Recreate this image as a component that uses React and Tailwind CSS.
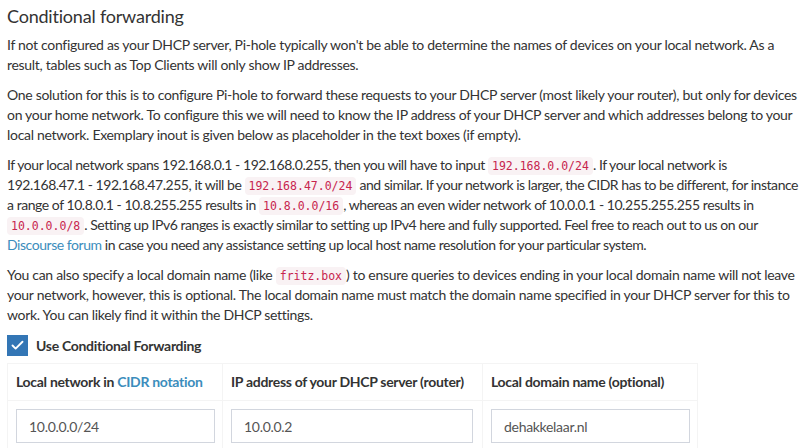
import { Check } from 'lucide-react'

function Code({ children }) {
  return (
    <code className="rounded-[4px] bg-[#f9f2f4] px-[4px] py-[2px] font-['DejaVu_Sans_Mono',monospace] text-[11.5px] leading-[12px] tracking-normal text-[#c7254e]">
      {children}
    </code>
  )
}

function Field({ value, width }) {
  return (
    <input
      type="text"
      defaultValue={value}
      className={`block h-[34px] border border-[#d2d6de] bg-white px-[12px] text-[14px] text-[#555] outline-none ${width}`}
    />
  )
}

export default function App() {
  return (
    <div className="h-[448px] w-[808px] overflow-hidden bg-white pl-[7px] pr-[3px] font-['Lato',sans-serif] text-[14px] leading-[20px] tracking-[-0.3px] text-[#333]">
      <h3 className="pt-[4px] pb-[7px] text-[18px] leading-[24px] font-normal tracking-[-0.2px] text-[#333]">
        Conditional forwarding
      </h3>

      <p className="mb-[10px]">
        If not configured as your DHCP server, Pi-hole typically won't be able to determine the names of devices on
        your local network. As a result, tables such as Top Clients will only show IP addresses.
      </p>

      <p className="mb-[10px]">
        One solution for this is to configure Pi-hole to forward these requests to your DHCP server (most likely your
        router), but only for devices on your home network. To configure this we will need to know the IP address of
        your DHCP server and which addresses belong to your local network. Exemplary inout is given below as
        placeholder in the text boxes (if empty).
      </p>

      {/* line breaks pinned to match the original wrapping */}
      <p className="mb-[10px] tracking-[-0.45px]">
        If your local network spans 192.168.0.1 - 192.168.0.255, then you will have to input{' '}
        <Code>192.168.0.0/24</Code>. If your local network is
        <br />
        192.168.47.1 - 192.168.47.255, it will be <Code>192.168.47.0/24</Code> and similar. If your network is
        larger, the CIDR has to be different, for instance
        <br />
        a range of 10.8.0.1 - 10.8.255.255 results in <Code>10.8.0.0/16</Code>, whereas an even wider network of
        10.0.0.1 - 10.255.255.255 results in
        <br />
        <Code>10.0.0.0/8</Code>. Setting up IPv6 ranges is exactly similar to setting up IPv4 here and fully
        supported. Feel free to reach out to us on our
        <br />
        <a href="#" className="text-[#3c8dbc]">
          Discourse forum
        </a>{' '}
        in case you need any assistance setting up local host name resolution for your particular system.
      </p>

      <p className="mb-[10px]">
        You can also specify a local domain name (like <Code>fritz.box</Code>) to ensure queries to devices ending in
        your local domain name will not leave your network, however, this is optional. The local domain name must
        match the domain name specified in your DHCP server for this to work. You can likely find it within the DHCP
        settings.
      </p>

      <label className="flex items-center gap-[8px] font-bold">
        <span className="flex h-[21px] w-[21px] items-center justify-center bg-[#3376b5]">
          <Check className="h-[15px] w-[15px] text-white" strokeWidth={3} />
        </span>
        Use Conditional Forwarding
      </label>

      <table className="mt-[7px] w-[690px] table-fixed border-collapse border border-[#f4f4f4]">
        <thead>
          <tr>
            <th className="h-[37px] w-[215px] whitespace-nowrap border border-[#f4f4f4] px-[8px] text-left font-bold">
              Local network in{' '}
              <a href="#" className="text-[#3c8dbc]">
                CIDR notation
              </a>
            </th>
            <th className="h-[37px] w-[260px] whitespace-nowrap border border-[#f4f4f4] px-[8px] text-left font-bold">
              IP address of your DHCP server (router)
            </th>
            <th className="h-[37px] w-[215px] whitespace-nowrap border border-[#f4f4f4] px-[8px] text-left font-bold">
              Local domain name (optional)
            </th>
          </tr>
        </thead>
        <tbody>
          <tr>
            <td className="border border-[#f4f4f4] px-[8px] py-[8px]">
              <Field value="10.0.0.0/24" width="w-[199px]" />
            </td>
            <td className="border border-[#f4f4f4] px-[8px] py-[8px]">
              <Field value="10.0.0.2" width="w-[242px]" />
            </td>
            <td className="border border-[#f4f4f4] px-[8px] py-[8px]">
              <Field value="dehakkelaar.nl" width="w-[199px]" />
            </td>
          </tr>
        </tbody>
      </table>
    </div>
  )
}
